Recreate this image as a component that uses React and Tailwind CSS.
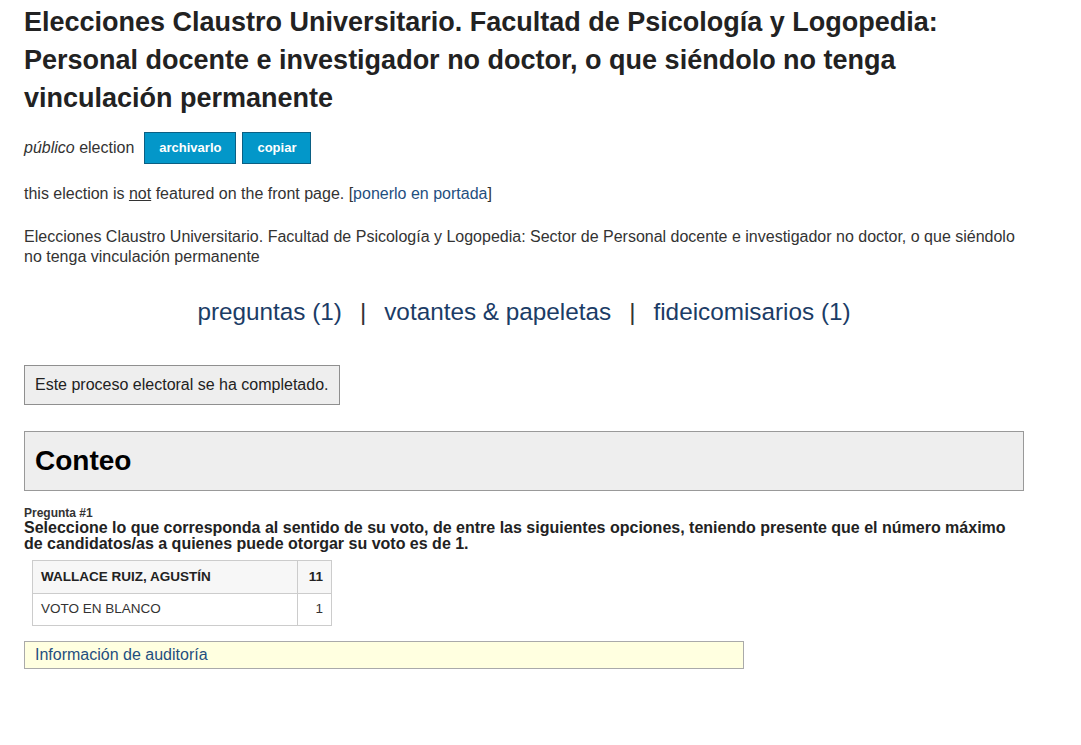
import React from 'react';

const ElectionView = () => {
  return (
    <div className="min-h-[745px] bg-white font-['Liberation_Sans',Arial,sans-serif] text-[#222]">
      <div className="w-[1000px] ml-6 pt-[3px]">
        <h1 className="text-[27px] font-bold leading-[38px] text-[#222]">
          Elecciones Claustro Universitario. Facultad de Psicología y Logopedia: Personal docente e investigador no doctor, o que siéndolo no tenga vinculación permanente
        </h1>

        <div className="flex items-center mt-[15px] text-base text-[#333]">
          <span><em>público</em> election</span>
          <button className="ml-[10px] h-8 px-[14px] bg-[#0397c9] border border-[#0b5f83] text-white text-[13px] font-bold">archivarlo</button>
          <button className="ml-[6px] h-8 px-[14px] bg-[#0397c9] border border-[#0b5f83] text-white text-[13px] font-bold">copiar</button>
        </div>

        <p className="mt-[20px] text-base text-[#333] leading-5">
          this election is <u>not</u> featured on the front page. [<a className="text-[#1f4f7f]">ponerlo en portada</a>]
        </p>

        <p className="mt-[23px] text-base text-[#333] leading-5">
          Elecciones Claustro Universitario. Facultad de Psicología y Logopedia: Sector de Personal docente e investigador no doctor, o que siéndolo no tenga vinculación permanente
        </p>

        <div className="mt-[29px] text-center text-[24.3px] leading-8 text-[#1b3c66]">
          <a>preguntas (1)</a>
          <span className="mx-[18px] text-[#333]">|</span>
          <a>votantes &amp; papeletas</a>
          <span className="mx-[18px] text-[#333]">|</span>
          <a>fideicomisarios (1)</a>
        </div>

        <div className="mt-[37px] inline-block bg-[#eeeeee] border border-[#8f8f8f] px-[10px] py-[9px] text-base leading-5 text-[#222]">
          Este proceso electoral se ha completado.
        </div>

        <div className="mt-[26px] bg-[#eeeeee] border border-[#999] px-[10px] h-[60px] flex items-center">
          <h2 className="text-[28px] font-bold text-black">Conteo</h2>
        </div>

        <div className="mt-[16px] text-[12px] leading-[13px] font-bold text-[#333]">Pregunta #1</div>
        <div className="text-base font-bold leading-4 text-[#222]">
          Seleccione lo que corresponda al sentido de su voto, de entre las siguientes opciones, teniendo presente que el número máximo de candidatos/as a quienes puede otorgar su voto es de 1.
        </div>

        <table className="ml-2 mt-2 border-collapse text-[13.5px] text-[#333]">
          <tbody>
            <tr className="bg-[#f7f7f7]">
              <td className="w-[265px] h-[33px] border border-[#ccc] px-2 font-bold text-[#222]">WALLACE RUIZ, AGUSTÍN</td>
              <td className="w-[34px] border border-[#ccc] px-2 text-right font-bold text-[#222]">11</td>
            </tr>
            <tr>
              <td className="h-[32px] border border-[#ccc] px-2">VOTO EN BLANCO</td>
              <td className="border border-[#ccc] px-2 text-right">1</td>
            </tr>
          </tbody>
        </table>

        <div className="mt-[15px] w-[720px] h-[28px] bg-[#ffffe0] border border-[#aaa] px-[10px] flex items-center text-base text-[#1f4f7f]">
          Información de auditoría
        </div>
      </div>
    </div>
  );
};

export default ElectionView;
